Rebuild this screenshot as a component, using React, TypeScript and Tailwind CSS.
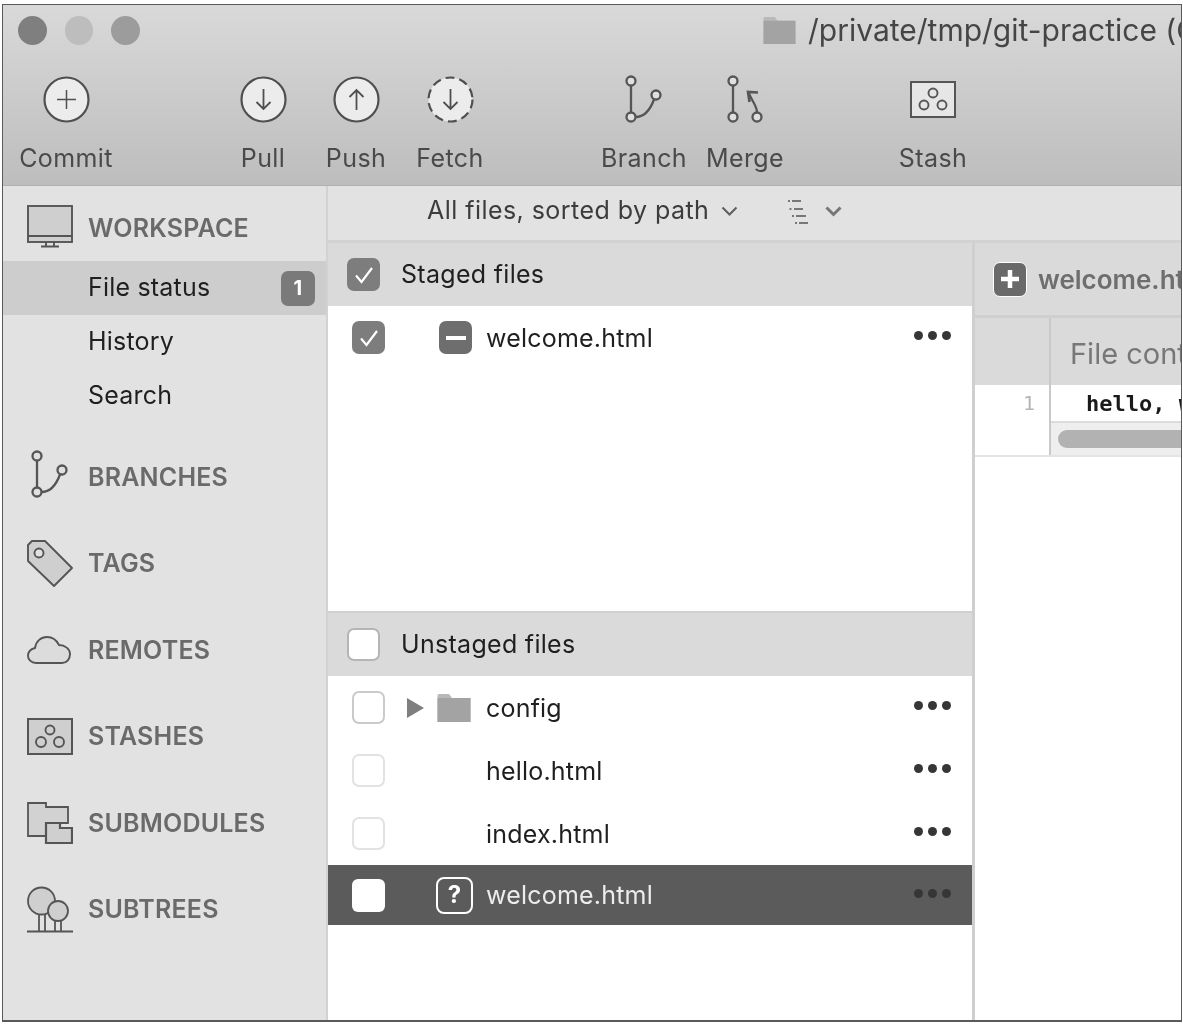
const ink = "#555555";

function RingIcon({ dir, dashed }: { dir: "plus" | "up" | "down"; dashed?: boolean }) {
  return (
    <svg width="47" height="47" viewBox="0 0 47 47" fill="none" stroke="#4f4f4f" strokeWidth="1.8">
      <circle cx="23.5" cy="23.5" r="22" fill="#ececec" strokeWidth="2.2" strokeDasharray={dashed ? "9 5" : undefined} />
      {dir === "plus" && <path d="M23.5 14v19M14 23.5h19" strokeWidth="1.5" />}
      {dir === "down" && <path d="M23.5 13v20M16.5 26l7 7 7-7" />}
      {dir === "up" && <path d="M23.5 34V14M16.5 21l7-7 7 7" />}
    </svg>
  );
}

function BranchIcon() {
  return (
    <svg width="40" height="48" viewBox="0 0 40 48" fill="none" stroke={ink} strokeWidth="2.3">
      <path d="M7 10.5v27M11.5 42c10 0 15-8 18.5-17.5" />
      <circle cx="7" cy="6" r="4.5" fill="#e0e0e0" />
      <circle cx="7" cy="42" r="4.5" fill="#e0e0e0" />
      <circle cx="32" cy="20" r="4.5" fill="#e0e0e0" />
    </svg>
  );
}

function MergeIcon() {
  return (
    <svg width="40" height="48" viewBox="0 0 40 48" fill="none" stroke={ink} strokeWidth="2.3">
      <path d="M8 10.5v27M32 37.5c0-7-5-11-8-19" />
      <path d="M33 17.5l-10-.5 1.5 10" strokeWidth="2.6" />
      <circle cx="8" cy="6" r="4.5" fill="#e0e0e0" />
      <circle cx="8" cy="42" r="4.5" fill="#e0e0e0" />
      <circle cx="32" cy="42" r="4.5" fill="#e0e0e0" />
    </svg>
  );
}

function StashIcon() {
  return (
    <svg width="46" height="37" viewBox="0 0 46 37" fill="none" stroke={ink} strokeWidth="1.9">
      <rect x="1" y="1" width="44" height="35" fill="#e6e6e6" strokeWidth="2" />
      <circle cx="23" cy="12" r="4.5" />
      <circle cx="14" cy="24" r="4.5" />
      <circle cx="32" cy="24" r="4.5" />
    </svg>
  );
}

function SidebarStashIcon() {
  return (
    <svg width="46" height="37" viewBox="0 0 46 37" fill="none" stroke={ink} strokeWidth="1.9">
      <rect x="1" y="1" width="44" height="35" fill="#cfcfcf" strokeWidth="2" />
      <circle cx="23" cy="12" r="4.5" />
      <circle cx="14" cy="24" r="5" />
      <circle cx="32" cy="24" r="5" />
    </svg>
  );
}

function MonitorIcon() {
  return (
    <svg width="46" height="43" viewBox="0 0 46 43" fill="none" stroke={ink} strokeWidth="1.9">
      <rect x="1" y="1" width="44" height="36" fill="#cfcfcf" />
      <path d="M1 31h44M19 37v4M27 37v4M14 41.5h18" />
    </svg>
  );
}

function TagIcon() {
  return (
    <svg width="46" height="47" viewBox="0 0 46 47" fill="none" stroke={ink} strokeWidth="1.9">
      <path d="M1 5l4-4h13l27 27-18 18L1 21z" fill="#cfcfcf" strokeLinejoin="round" />
      <circle cx="12" cy="13" r="4.5" fill="#e2e2e2" />
    </svg>
  );
}

function CloudIcon() {
  return (
    <svg width="44" height="28" viewBox="0 0 44 28" fill="none" stroke={ink} strokeWidth="1.9">
      <path d="M9 27C4 27 1 23 1 20c0-4 3-7 7-8C9 5 14 1 20 1c6 0 10 4 12 8 6 0 11 4 11 9s-3 9-8 9z" fill="#dcdcdc" />
    </svg>
  );
}

function SubmoduleIcon() {
  return (
    <svg width="46" height="42" viewBox="0 0 46 42" fill="none" stroke={ink} strokeWidth="1.8">
      <path d="M1 1h18v4h22v16H19v13H1z" fill="#d2d2d2" />
      <path d="M19 41V21h14v5h12v15z" fill="#cfcfcf" strokeWidth="2.2" />
    </svg>
  );
}

function SubtreeIcon() {
  return (
    <svg width="46" height="47" viewBox="0 0 46 47" fill="none" stroke={ink} strokeWidth="1.8">
      <path d="M12 28v17M18 28v17M28 34v11M34 34v11" />
      <circle cx="14.5" cy="15" r="13.5" fill="#cfcfcf" />
      <circle cx="31" cy="25" r="10" fill="#cfcfcf" />
      <path d="M0 45.5h46" />
    </svg>
  );
}

function FolderIcon({ width, height }: { width: number; height: number }) {
  return (
    <svg width={width} height={height} viewBox="0 0 35 30">
      <path d="M1 2.5A1.5 1.5 0 0 1 2.5 1h10l3 4H34v24H1z" fill="#b9b9b9" />
      <path d="M1 5h33v24H1z" fill="#a3a3a3" />
    </svg>
  );
}

function Chevron({ className, heavy }: { className: string; heavy?: boolean }) {
  return (
    <svg className={className} width="17" height="11" viewBox="0 0 17 11" fill="none" stroke={heavy ? "#777" : "#5e5e5e"} strokeWidth={heavy ? 3 : 2}>
      <path d="M1.5 1.5l7 7 7-7" />
    </svg>
  );
}

function Check() {
  return (
    <svg width="20" height="20" viewBox="0 0 20 20" fill="none" stroke="#fff" strokeWidth="2.2">
      <path d="M2 10.5l5.5 6.5L18 3" />
    </svg>
  );
}

function Box({ checked, ghost, header }: { checked?: boolean; ghost?: boolean; header?: boolean }) {
  const base = "w-[33px] h-[33px] rounded-[7px] flex items-center justify-center shrink-0";
  if (checked) return <div className={`${base} bg-[#7d7d7d]`}><Check /></div>;
  if (header) return <div className={`${base} bg-white border-2 border-[#b5b5b5]`} />;
  return <div className={`${base} bg-white border-2 ${ghost ? "border-[#e2e2e2]" : "border-[#cacaca]"}`} />;
}

function Dots() {
  const dot = "w-[9px] h-[9px] rounded-full bg-[#363636]";
  return (
    <div className="ml-auto mr-[21px] flex gap-[5px] mb-[4px]">
      <span className={dot} />
      <span className={dot} />
      <span className={dot} />
    </div>
  );
}

function ToolButton({ label, icon, ml }: { label: string; icon: React.ReactNode; ml: string }) {
  return (
    <div className={`w-[88px] flex flex-col items-center ${ml}`}>
      <div className="h-[54px] flex items-center justify-center">{icon}</div>
      <span className="mt-[17px] text-[25px] leading-[30px] tracking-[0.4px] text-[#4a4a4a] whitespace-nowrap">{label}</span>
    </div>
  );
}

function Section({ label, icon }: { label: string; icon: React.ReactNode }) {
  return (
    <div className="h-[86.5px] flex items-center">
      <div className="w-[85px] pl-[24px] flex items-center justify-start">{icon}</div>
      <span className="text-[25px] font-semibold tracking-[0.2px] text-[#6a6a6a]">{label}</span>
    </div>
  );
}

function FileRow({ name, lead, checkbox, selected }: { name: string; lead?: React.ReactNode; checkbox: React.ReactNode; selected?: boolean }) {
  return (
    <div className={`flex items-center pl-[24px] ${selected ? "h-[60px] bg-[#5b5b5b] text-[#ececec]" : "h-[63px] text-[#1f1f1f]"}`}>
      {checkbox}
      <div className="w-[101px] pr-[14px] flex items-center justify-end gap-[12px] shrink-0">{lead}</div>
      <span className="mt-[2px] text-[25px] tracking-[0.2px]">{name}</span>
      <Dots />
    </div>
  );
}

export default function App() {
  return (
    <div className="w-[1183px] h-[1025px] bg-white pt-[4px] pl-[2px] font-['Inter',sans-serif] overflow-hidden blur-[0.6px]">
      <div className="w-[1180px] h-[1018px] border-b-2 border-l border-r border-t border-[#5a5a5a] flex flex-col overflow-hidden bg-white">
        {/* Title bar + toolbar */}
        <div className="h-[181px] shrink-0 bg-gradient-to-b from-[#d9d9d9] to-[#bdbdbd] border-b border-[#b0b0b0]">
          <div className="h-[52px] flex items-center pl-[15px] pb-[1px]">
            <div className="flex gap-[18px]">
              <span className="w-[29px] h-[29px] rounded-full bg-[#7f7f7f]" />
              <span className="w-[28px] h-[29px] rounded-full bg-[#bdbdbd]" />
              <span className="w-[29px] h-[29px] rounded-full bg-[#9c9c9c]" />
            </div>
            <div className="ml-[622px] flex items-center gap-[11px] whitespace-nowrap">
              <FolderIcon width={35} height={29} />
              <span className="text-[30px] text-[#454545]">/private/tmp/git-practice (Git)</span>
            </div>
          </div>
          <div className="flex pl-[19px] pt-[15px]">
            <ToolButton label="Commit" ml="" icon={<RingIcon dir="plus" />} />
            <ToolButton label="Pull" ml="ml-[109px]" icon={<RingIcon dir="down" />} />
            <ToolButton label="Push" ml="ml-[5px]" icon={<RingIcon dir="up" />} />
            <ToolButton label="Fetch" ml="ml-[6px]" icon={<RingIcon dir="down" dashed />} />
            <ToolButton label="Branch" ml="ml-[106px]" icon={<BranchIcon />} />
            <ToolButton label="Merge" ml="ml-[13px]" icon={<MergeIcon />} />
            <ToolButton label="Stash" ml="ml-[100px]" icon={<StashIcon />} />
          </div>
        </div>

        <div className="flex flex-1 min-h-0">
          {/* Sidebar */}
          <div className="w-[325px] shrink-0 bg-[#e2e2e2] border-r-2 border-[#d2d2d2]">
            <div className="h-[75px] flex items-center pt-[6px]">
              <div className="w-[85px] pl-[24px]"><MonitorIcon /></div>
              <span className="mt-[5px] text-[25px] font-semibold tracking-[0.2px] text-[#6a6a6a]">WORKSPACE</span>
            </div>
            <div className="h-[54px] bg-[#cdcdcd] flex items-center pl-[85px] pr-[11px] text-[25px] text-[#1f1f1f] tracking-[0.2px]">
              File status
              <span className="ml-auto w-[34px] h-[35px] rounded-[7px] bg-[#7a7a7a] flex items-center justify-center text-[20px] font-bold text-white">1</span>
            </div>
            <div className="h-[54px] flex items-center pl-[85px] text-[25px] text-[#1f1f1f] tracking-[0.2px]">History</div>
            <div className="h-[54px] flex items-center pl-[85px] text-[25px] text-[#1f1f1f] tracking-[0.2px]">Search</div>
            <div className="mt-[11px]">
              <Section label="BRANCHES" icon={<div className="ml-[3px] mb-[6px]"><BranchIcon /></div>} />
              <Section label="TAGS" icon={<TagIcon />} />
              <Section label="REMOTES" icon={<CloudIcon />} />
              <Section label="STASHES" icon={<SidebarStashIcon />} />
              <Section label="SUBMODULES" icon={<SubmoduleIcon />} />
              <Section label="SUBTREES" icon={<SubtreeIcon />} />
            </div>
          </div>

          {/* Main */}
          <div className="flex-1 min-w-0 flex flex-col">
            <div className="h-[57px] shrink-0 bg-[#e2e2e2] border-b-[3px] border-[#d2d2d2] flex items-start pt-[9px] pl-[99px]">
              <span className="text-[25px] leading-[30px] text-[#3c3c3c] tracking-[0.45px]">All files, sorted by path</span>
              <Chevron className="ml-[12px] mt-[11px]" />
              <svg className="ml-[49px] mt-[4px]" width="22" height="26" viewBox="0 0 22 26" fill="none" stroke="#777" strokeWidth="2.2">
                <path d="M1 2h2M5 2h9M2.5 10h2M7 10h9M5 17h2M9 17h10M8 24h2M12 24h9" />
              </svg>
              <Chevron heavy className="ml-[16px] mt-[11px]" />
            </div>

            <div className="flex flex-1 min-h-0">
              {/* File lists */}
              <div className="w-[644px] shrink-0 flex flex-col">
                <div className="h-[63px] bg-[#dadada] flex items-center pl-[19px] gap-[21px]">
                  <Box checked />
                  <span className="text-[25px] text-[#1f1f1f] tracking-[0.3px]">Staged files</span>
                </div>
                <div className="h-[305px]">
                  <FileRow
                    name="welcome.html"
                    checkbox={<Box checked />}
                    lead={
                      <div className="w-[33px] h-[33px] rounded-[7px] bg-[#6e6e6e] flex items-center justify-center">
                        <span className="w-[20px] h-[4px] bg-white" />
                      </div>
                    }
                  />
                </div>
                <div className="h-[65px] border-t-2 border-[#d0d0d0] bg-[#dadada] flex items-center pl-[19px] gap-[21px]">
                  <Box header />
                  <span className="text-[25px] text-[#1f1f1f] tracking-[0.3px]">Unstaged files</span>
                </div>
                <FileRow
                  name="config"
                  checkbox={<Box />}
                  lead={
                    <>
                      <span className="w-0 h-0 border-y-[10px] border-y-transparent border-l-[17px] border-l-[#7f7f7f]" />
                      <FolderIcon width={36} height={30} />
                    </>
                  }
                />
                <FileRow name="hello.html" checkbox={<Box ghost />} />
                <FileRow name="index.html" checkbox={<Box ghost />} />
                <FileRow
                  name="welcome.html"
                  selected
                  checkbox={<div className="w-[33px] h-[33px] rounded-[6px] bg-white shrink-0" />}
                  lead={
                    <div className="w-[37px] h-[37px] mr-[-1px] rounded-[8px] border-2 border-white flex items-center justify-center text-[24px] font-bold text-white">?</div>
                  }
                />
              </div>

              {/* Diff panel */}
              <div className="flex-1 min-w-0 border-l-[3px] border-[#cfcfcf] overflow-hidden">
                <div className="h-[75px] bg-[#dadada] border-b-[3px] border-[#cfcfcf] flex items-center pl-[18px] gap-[11px] whitespace-nowrap">
                  <div className="w-[34px] h-[35px] rounded-[7px] bg-[#6a6a6a] border border-white flex items-center justify-center shrink-0">
                    <svg width="20" height="20" viewBox="0 0 20 20" stroke="#fff" strokeWidth="4.5"><path d="M10 1v18M1 10h18" /></svg>
                  </div>
                  <span className="text-[26px] font-semibold text-[#6e6e6e]">welcome.html</span>
                </div>
                <div className="flex h-[139px] border-b-2 border-[#e4e4e4]">
                  <div className="w-[74px] shrink-0 flex flex-col">
                    <div className="h-[67px] bg-[#dadada]" />
                    <div className="h-[36px] pr-[14px] flex items-center justify-end font-['DejaVu_Sans_Mono',monospace] text-[20px] text-[#b5b5b5]">1</div>
                  </div>
                  <div className="flex-1 min-w-0 border-l-2 border-[#c9c9c9] flex flex-col whitespace-nowrap">
                    <div className="h-[67px] bg-[#dadada] flex items-center pl-[19px] pt-[4px] text-[29px] text-[#777]">File contents</div>
                    <div className="h-[36px] pl-[35px] flex items-center font-['DejaVu_Sans_Mono',monospace] text-[22px] font-semibold text-[#1a1a1a]">hello, world</div>
                    <div className="h-[34px] bg-[#eeeeee] border-t-2 border-[#dcdcdc] flex items-center pl-[7px]">
                      <div className="w-full h-[18px] rounded-l-full bg-[#b2b2b2]" />
                    </div>
                  </div>
                </div>
              </div>
            </div>
          </div>
        </div>
      </div>
    </div>
  );
}
